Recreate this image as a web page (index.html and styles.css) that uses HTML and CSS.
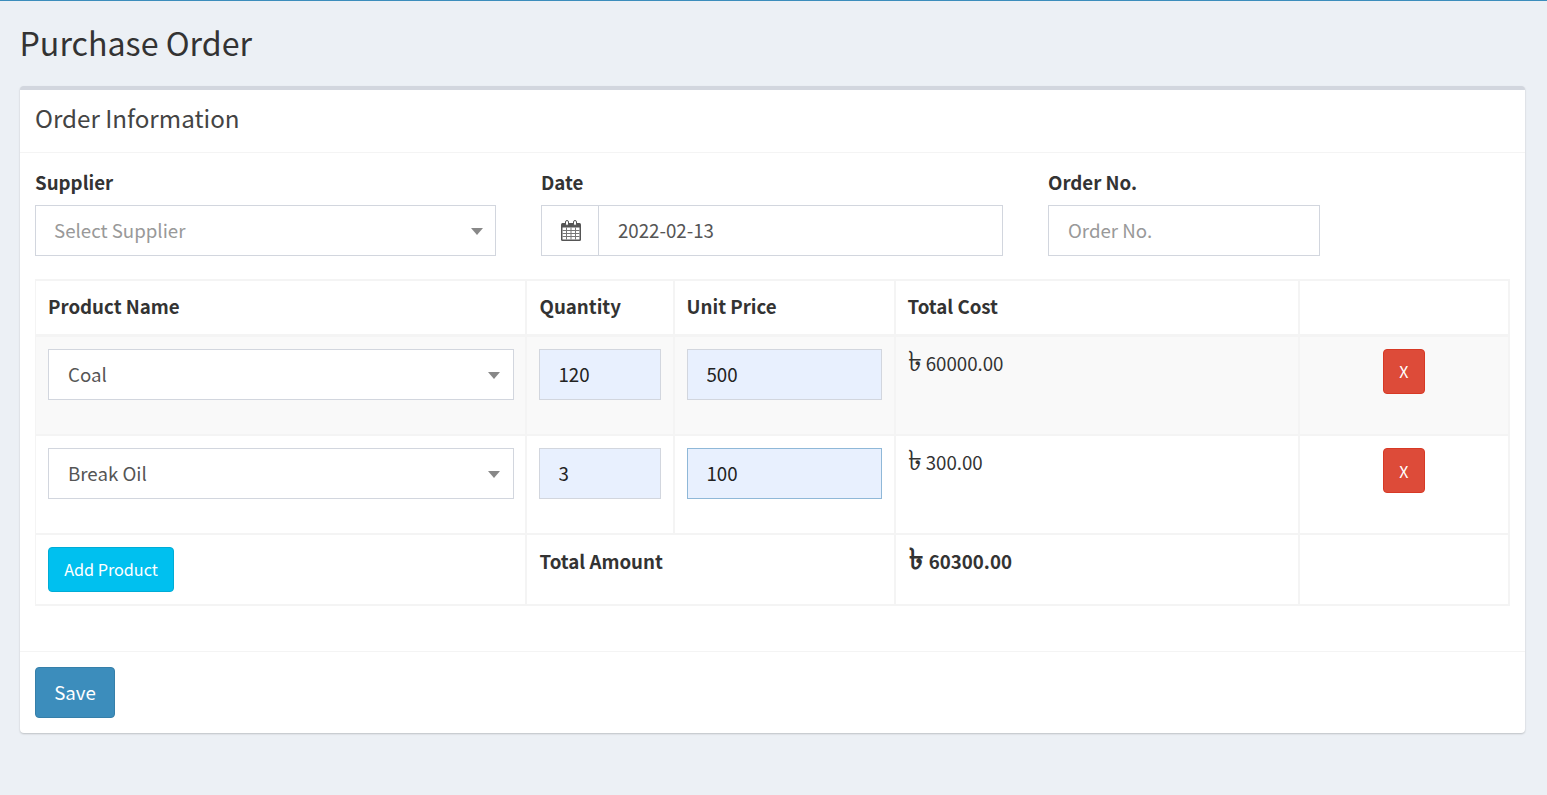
FILE: index.html
```html
<!DOCTYPE html>
<html>
<head>
<meta charset="UTF-8">
<title>Purchase Order</title>
<link rel="stylesheet" href="styles.css">
</head>
<body>

<section class="content-header">
	<h1>Purchase Order</h1>
</section>

<section class="content">
	<div class="box">
		<div class="box-header">
			<h3>Order Information</h3>
		</div>
		<div class="box-body">
			<div class="form-row">
				<div class="form-group">
					<label>Supplier</label>
					<div class="select-box placeholder">Select Supplier</div>
				</div>
				<div class="form-group">
					<label>Date</label>
					<div class="input-group">
						<span class="addon">
							<svg class="cal-icon" width="20" height="21" viewBox="0 0 20 21">
								<rect y="3" width="20" height="18" rx="1.500" fill="#555"/>
								<rect x="1.500" y="7.500" width="17" height="12" fill="#fff"/>
								<path stroke="#777" fill="none" d="M1.500 10.500h17M1.500 13.500h17M1.500 16.500h17M5.500 7.500v12M10 7.500v12M14.500 7.500v12"/>
								<rect x="4.500" y="0.500" width="3" height="5" rx="1.500" fill="#fff" stroke="#555"/>
								<rect x="12.500" y="0.500" width="3" height="5" rx="1.500" fill="#fff" stroke="#555"/>
							</svg>
						</span>
						<input class="form-control" type="text" value="2022-02-13">
					</div>
				</div>
				<div class="form-group">
					<label>Order No.</label>
					<input class="form-control" type="text" placeholder="Order No.">
				</div>
			</div>

			<table class="order-table">
				<colgroup>
					<col class="c-name">
					<col class="c-qty">
					<col class="c-price">
					<col class="c-total">
					<col class="c-del">
				</colgroup>
				<thead>
					<tr>
						<th>Product Name</th>
						<th>Quantity</th>
						<th>Unit Price</th>
						<th>Total Cost</th>
						<th></th>
					</tr>
				</thead>
				<tbody>
					<tr class="odd">
						<td><div class="select-box">Coal</div></td>
						<td><input class="form-control filled" type="text" value="120"></td>
						<td><input class="form-control filled" type="text" value="500"></td>
						<td class="cost"><span class="taka">৳</span> 60000.00</td>
						<td class="act"><button class="btn btn-danger">X</button></td>
					</tr>
					<tr>
						<td><div class="select-box">Break Oil</div></td>
						<td><input class="form-control filled" type="text" value="3"></td>
						<td><input class="form-control filled focus" type="text" value="100"></td>
						<td class="cost"><span class="taka">৳</span> 300.00</td>
						<td class="act"><button class="btn btn-danger">X</button></td>
					</tr>
					<tr class="total-row">
						<td><button class="btn btn-info">Add Product</button></td>
						<td colspan="2"><b>Total Amount</b></td>
						<td class="grand"><b><span class="taka">৳</span> 60300.00</b></td>
						<td></td>
					</tr>
				</tbody>
			</table>
		</div>
		<div class="box-footer">
			<button class="btn btn-primary">Save</button>
		</div>
	</div>
</section>

</body>
</html>
```

FILE: styles.css
```css
* {
	box-sizing: border-box;
}
body {
	margin: 0;
	min-height: 795px;
	background: #ecf0f5;
	border-top: 1px solid #3c8dbc;
	font-family: "Noto Sans CJK SC", "Noto Sans", sans-serif;
	font-size: 18.700px;
	line-height: 28px;
	color: #333;
}
.content-header {
	padding: 18px 20px 0;
}
h1 {
	margin: 0 0 0 -0.500px;
	font-size: 32.200px;
	font-weight: 400;
	line-height: 46px;
}
.content {
	padding: 21px 22px 0 20px;
}
.box {
	background: #fff;
	border-top: 4px solid #d2d6de;
	border-radius: 4px;
	box-shadow: 0 1px 2px rgba(0, 0, 0, 0.2);
}
.box-header {
	padding: 11px 15px;
	height: 63px;
	border-bottom: 1px solid #f4f4f4;
}
h3 {
	margin: 0;
	font-size: 24.200px;
	font-weight: 400;
	line-height: 34px;
	color: #444;
}
.box-body {
	padding: 15px;
}
.form-row {
	display: grid;
	grid-template-columns: 461px 462px 272px;
	column-gap: 45px;
	margin-bottom: 23px;
}
label {
	display: block;
	font-weight: 700;
	height: 37px;
}
.form-control, .select-box {
	display: block;
	width: 100%;
	height: 51px;
	padding: 0 19px;
	border: 1px solid #d2d6de;
	background: #fff;
	font: inherit;
	color: #555;
	line-height: 48px;
	outline: none;
	border-radius: 0;
}
.form-control {
	padding-bottom: 2px;
}
.form-control::placeholder, .placeholder {
	color: #999;
	opacity: 1;
}
.select-box.placeholder {
	padding-left: 18px;
}
.select-box {
	position: relative;
}
.select-box::after {
	content: "";
	position: absolute;
	right: 12px;
	top: 22px;
	border: 6px solid transparent;
	border-top: 7px solid #888;
	border-bottom: 0;
}
.order-table .select-box::after {
	right: 13px;
}
.input-group {
	display: flex;
}
.addon {
	flex: none;
	width: 57px;
	height: 51px;
	padding-left: 2px;
	display: flex;
	align-items: center;
	justify-content: center;
	border: 1px solid #d2d6de;
	border-right: 0;
}
.cal-icon {
	display: block;
}
.order-table {
	width: 100%;
	table-layout: fixed;
	border-collapse: collapse;
	border: 2px solid #f4f4f4;
	border-left-width: 1px;
}
.c-name { width: 490px; }
.c-qty { width: 148px; }
.c-price { width: 221px; }
.c-total { width: 404px; }
.order-table th, .order-table td {
	border: 2px solid #f4f4f4;
	padding: 12px;
	vertical-align: top;
	text-align: left;
}
.order-table th:first-child, .order-table td:first-child {
	border-left-width: 1px;
	padding-right: 11px;
}
.order-table th {
	height: 55px;
	padding-top: 11px;
	border-bottom-width: 3px;
	font-weight: 700;
}
.order-table th:nth-child(2), .order-table .total-row td:nth-child(2) {
	padding-left: 13px;
}
.order-table tbody tr {
	height: 99px;
}
.order-table tr.odd {
	height: 100px;
}
.order-table tr.total-row {
	height: 68px;
}
.odd td {
	background: #f9f9f9;
}
.order-table td.act {
	text-align: center;
}
.taka {
	font-size: 28px;
	line-height: 0;
}
.grand .taka {
	font-size: 29px;
	margin: 0 2px 0 1px;
}
.filled {
	background: #e8f0fe;
	color: #222;
}
.focus {
	border-color: #8fb8d8;
}
.btn {
	border: 1px solid transparent;
	border-radius: 4px;
	font: inherit;
	color: #fff;
	cursor: pointer;
}
.btn-danger {
	width: 42px;
	height: 45px;
	padding: 0;
	font-size: 16px;
	background: #dd4b39;
	border-color: #d73925;
}
.btn-info {
	width: 126px;
	height: 45px;
	padding: 0 0 2px;
	font-size: 16.200px;
	background: #00c0ef;
	border-color: #00acd6;
}
.btn-primary {
	width: 80px;
	height: 51px;
	padding: 0 0 2px;
	background: #3c8dbc;
	border-color: #367fa9;
}
.box-footer {
	padding: 15px;
	height: 82px;
	margin-top: 30px;
	border-top: 1px solid #f4f4f4;
}
```
